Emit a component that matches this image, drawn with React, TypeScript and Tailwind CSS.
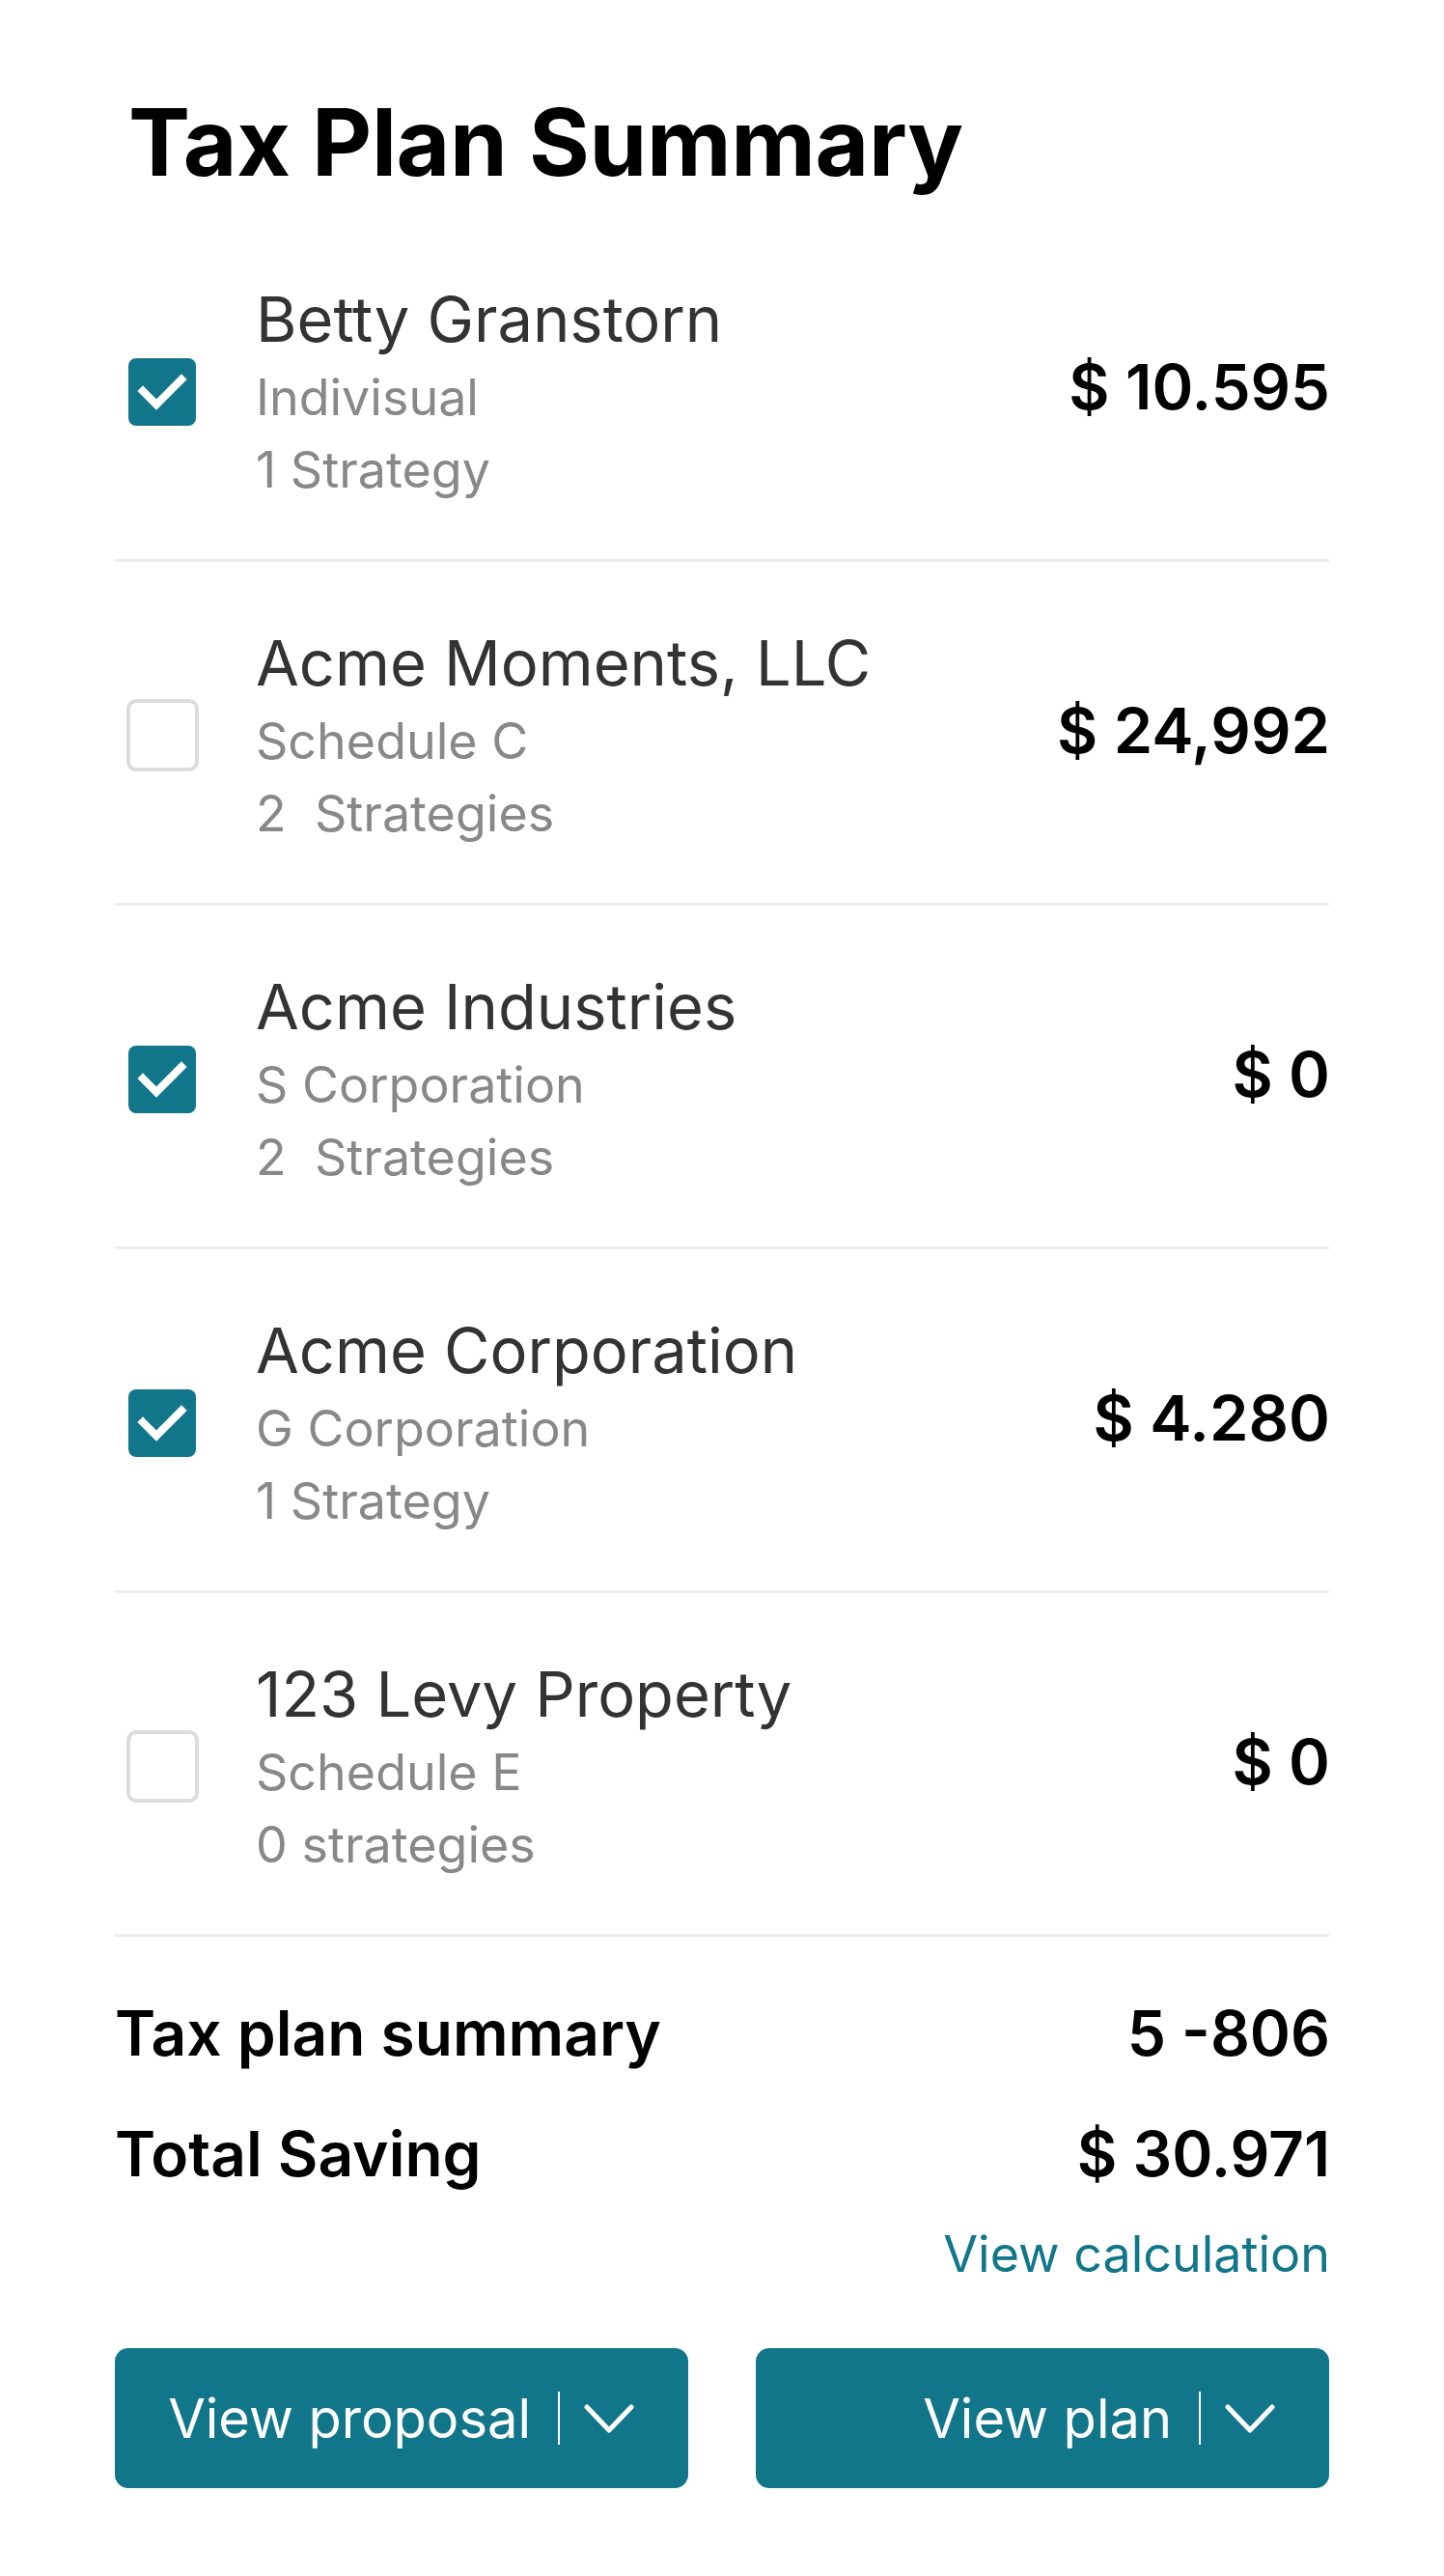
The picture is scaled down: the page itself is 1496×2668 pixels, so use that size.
const rows = [
  { name: "Betty Granstorn", type: "Indivisual", strategies: "1 Strategy", amount: "$ 10.595", checked: true },
  { name: "Acme Moments, LLC", type: "Schedule C", strategies: "2  Strategies", amount: "$ 24,992", checked: false },
  { name: "Acme Industries", type: "S Corporation", strategies: "2  Strategies", amount: "$ 0", checked: true },
  { name: "Acme Corporation", type: "G Corporation", strategies: "1 Strategy", amount: "$ 4.280", checked: true },
  { name: "123 Levy Property", type: "Schedule E", strategies: "0 strategies", amount: "$ 0", checked: false },
];

function Checkbox({ checked }: { checked: boolean }) {
  if (checked) {
    return (
      <div className="w-[70px] h-[70px] rounded-[8px] bg-[#12768a] flex items-center justify-center">
        <svg width="70" height="70" viewBox="0 0 70 70" fill="none">
          <path d="M15 34 L29 48 L55 22" stroke="white" strokeWidth="8" strokeLinecap="square" strokeLinejoin="miter" />
        </svg>
      </div>
    );
  }
  return <div className="w-[75px] h-[75px] rounded-[10px] border-[4px] border-[#dcdcdf] bg-white" />;
}

function SplitButton({ label }: { label: string }) {
  return (
    <button className="flex-1 h-[145px] rounded-[14px] bg-[#12768a] text-white flex items-center justify-end pr-[56px]">
      <span className="text-[56px] leading-none">{label}</span>
      <span className="w-[2px] h-[55px] bg-white ml-[28px] mr-[25px]" />
      <svg width="52" height="30" viewBox="0 0 52 30" fill="none">
        <path d="M3 3 L26 27 L49 3" stroke="white" strokeWidth="5" strokeLinecap="round" strokeLinejoin="round" />
      </svg>
    </button>
  );
}

export default function App() {
  return (
    <div className="min-h-screen bg-white px-[119px] pt-[89px] pb-[89px]" style={{ fontFamily: "Inter, 'Noto Sans', sans-serif" }}>
      <h1 className="text-[96px] leading-[116px] font-bold text-black ml-[14px] mb-[21px] tracking-[-0.3px]">Tax Plan Summary</h1>

      {/* entity rows */}
      <div>
        {rows.map((row, i) => (
          <div key={i} className="h-[356px] border-b-[3px] border-[#ededed] flex items-center pt-[6px]">
            <div className="w-[76px] ml-[11px] flex justify-center">
              <Checkbox checked={row.checked} />
            </div>
            <div className="ml-[59px] flex-1">
              <p className="text-[65px] leading-[87px] text-[#333333]">{row.name}</p>
              <p className="text-[52px] leading-[75px] text-[#888888] whitespace-pre">{row.type}</p>
              <p className="text-[52px] leading-[75px] text-[#888888] whitespace-pre">{row.strategies}</p>
            </div>
            <div className="text-[65px] font-semibold text-black -mr-[1px] -mt-[10px]">{row.amount}</div>
          </div>
        ))}
      </div>

      {/* totals */}
      <div className="pt-[60px]">
        <div className="flex justify-between items-center text-[64px] leading-[80px] font-semibold text-black">
          <span>Tax plan summary</span>
          <span className="-mr-[1px]">5 -806</span>
        </div>
        <div className="flex justify-between items-center text-[64px] leading-[80px] font-semibold text-black mt-[45px]">
          <span>Total Saving</span>
          <span className="-mr-[1px]">$ 30.971</span>
        </div>
        <div className="flex justify-end mt-[26px]">
          <a className="text-[52px] leading-[75px] text-[#12768a] -mr-[1px]">View calculation</a>
        </div>
      </div>

      <div className="flex gap-[70px] mt-[60px]">
        <SplitButton label="View proposal" />
        <SplitButton label="View plan" />
      </div>
    </div>
  );
}
